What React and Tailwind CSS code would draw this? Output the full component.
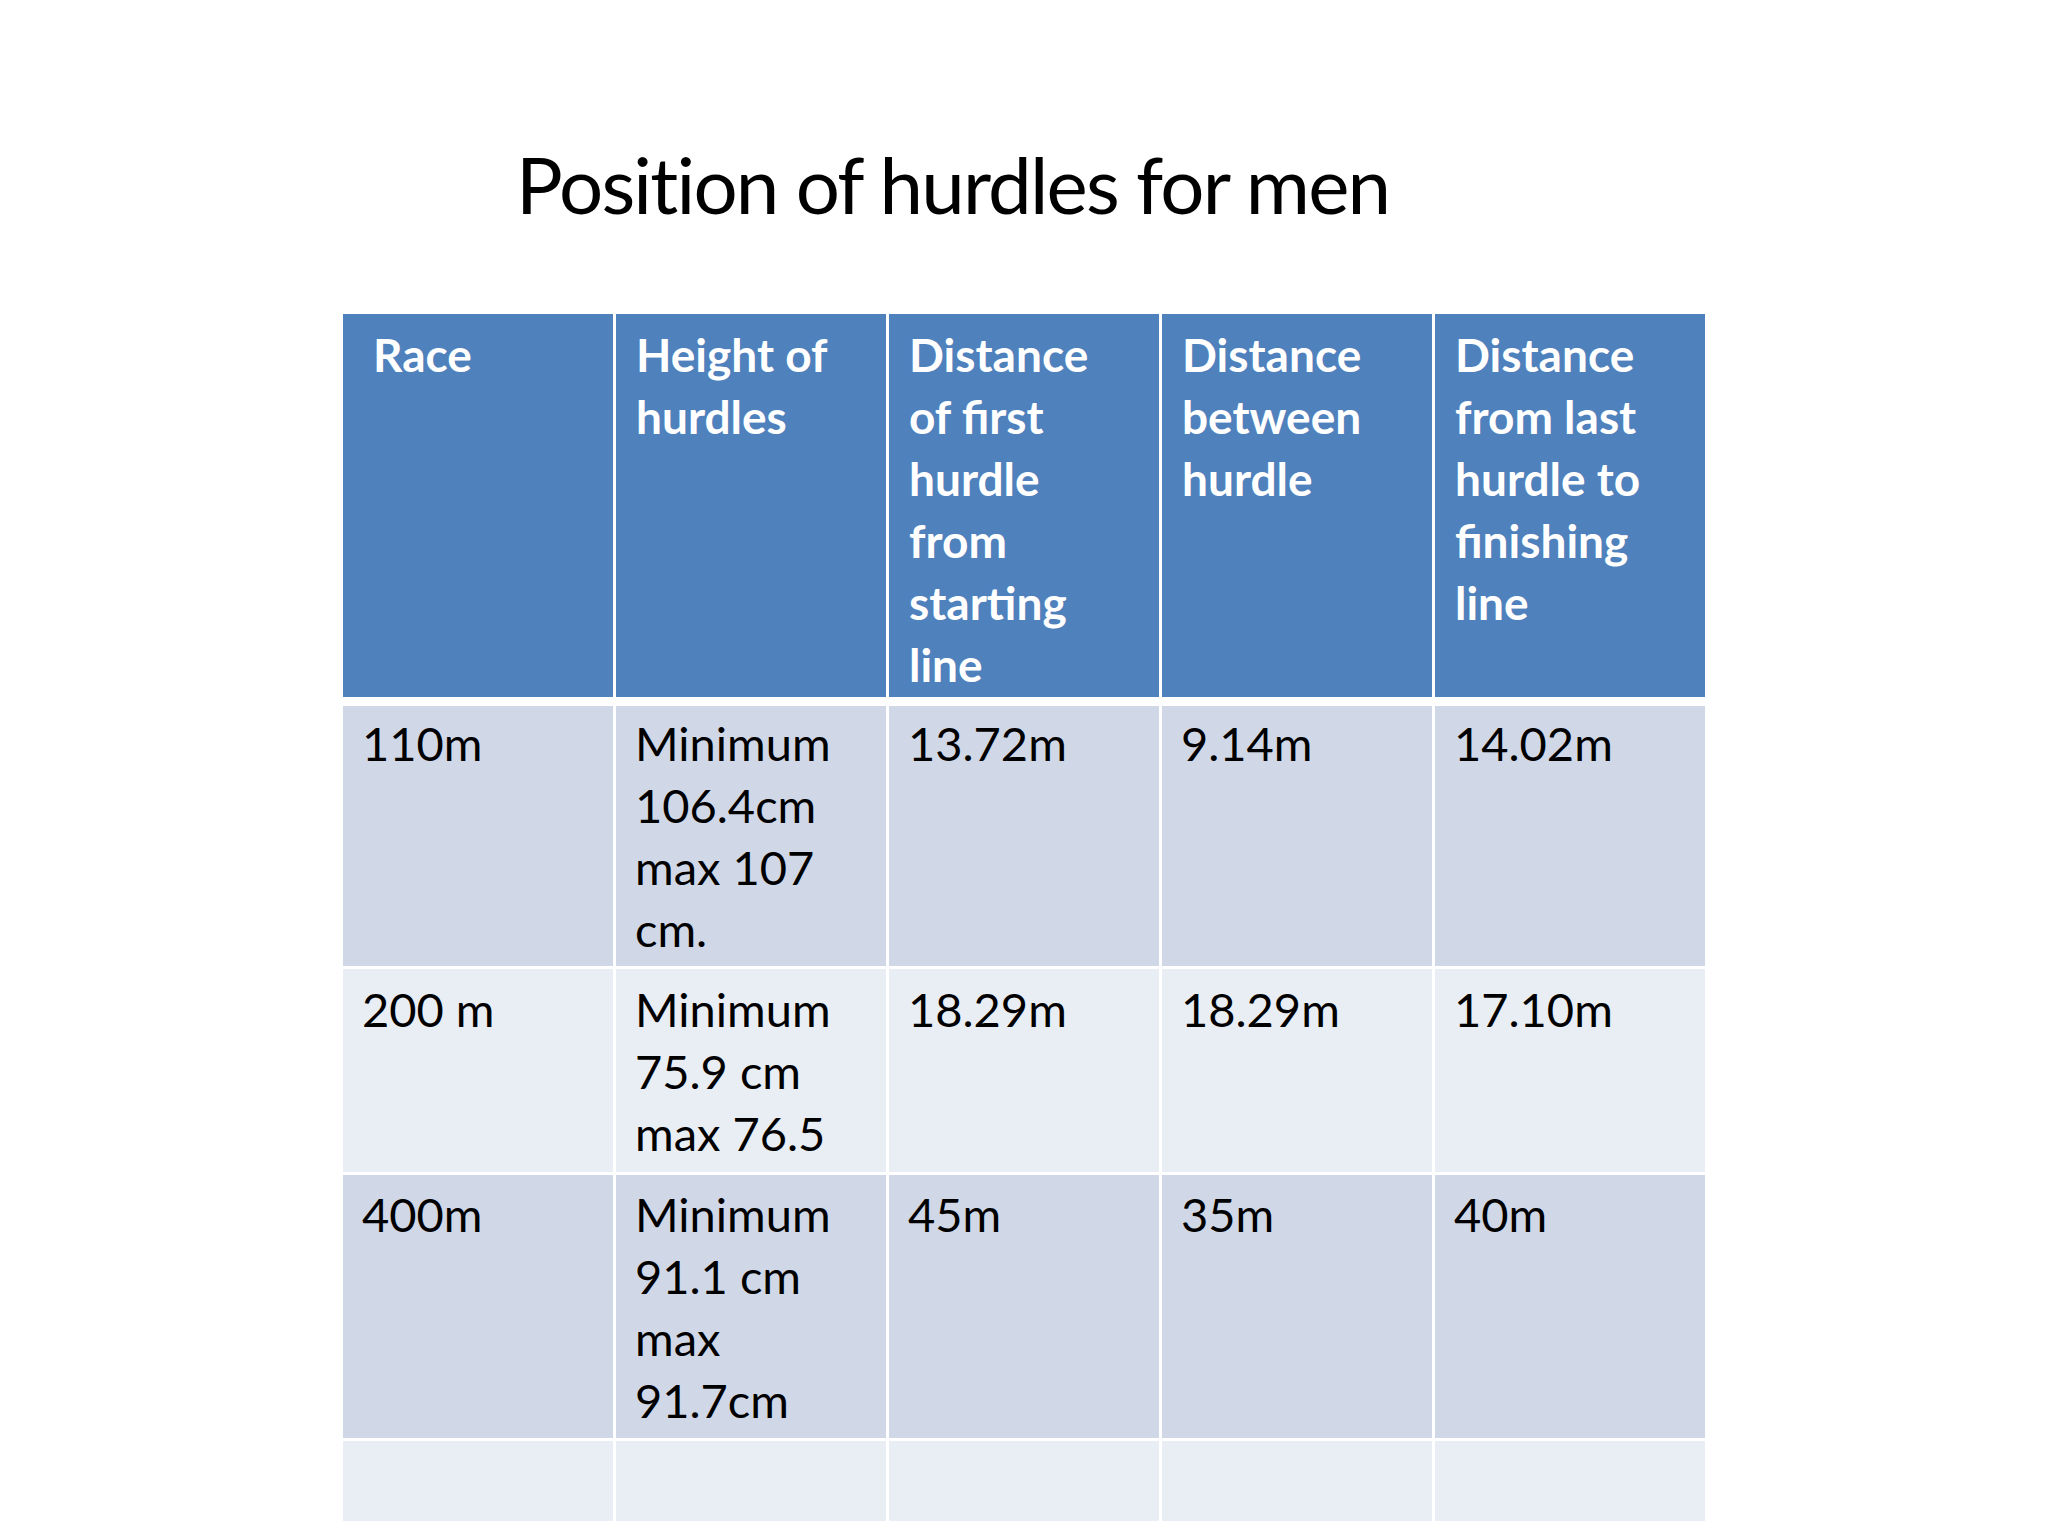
import React from "react";

const header = [
  ["Race"],
  ["Height of", "hurdles"],
  ["Distance", "of first", "hurdle", "from", "starting", "line"],
  ["Distance", "between", "hurdle"],
  ["Distance", "from last", "hurdle to", "finishing", "line"],
];

const rows = [
  {
    h: "h-[260px]",
    pt: "pt-[6px]",
    bg: "bg-[#d0d8e8]",
    cells: [["110m"], ["Minimum", "106.4cm", "max 107", "cm."], ["13.72m"], ["9.14m"], ["14.02m"]],
  },
  {
    h: "h-[203px]",
    pt: "pt-[9px]",
    bg: "bg-[#e9edf4]",
    cells: [["200 m"], ["Minimum", "75.9 cm", "max 76.5"], ["18.29m"], ["18.29m"], ["17.10m"]],
  },
  {
    h: "h-[263px]",
    pt: "pt-[8px]",
    bg: "bg-[#d0d8e8]",
    cells: [["400m"], ["Minimum", "91.1 cm", "max", "91.7cm"], ["45m"], ["35m"], ["40m"]],
  },
  {
    h: "h-[80px]",
    pt: "pt-[6px]",
    bg: "bg-[#e9edf4]",
    cells: [[], [], [], [], []],
  },
];

function Lines({ lines }) {
  return lines.map((l, i) => (
    <div key={i} className="whitespace-nowrap">
      {l}
    </div>
  ));
}

export default function App() {
  return (
    <div className="w-[2048px] h-[1536px] bg-white flex flex-col font-['Lato',_sans-serif] text-black overflow-hidden">
      <div className="pt-[136px] pl-[516px] text-[78px] leading-[96px] tracking-[-1.8px] whitespace-nowrap">
        Position of hurdles for men
      </div>
      <div className="mt-[82px] ml-[343px] w-[1362px] flex flex-col">
        <div className="grid grid-cols-[repeat(5,270px)] gap-x-[3px] h-[383px]">
          {header.map((lines, i) => (
            <div
              key={i}
              className={`bg-[#4f81bd] text-white font-bold text-[46px] leading-[62px] pt-[10px] ${
                i === 0 ? "pl-[30px]" : "pl-[20px]"
              }`}
            >
              <Lines lines={lines} />
            </div>
          ))}
        </div>
        {rows.map((r, ri) => (
          <div
            key={ri}
            className={`grid grid-cols-[repeat(5,270px)] gap-x-[3px] ${r.h} ${ri === 0 ? "mt-[9px]" : "mt-[3px]"}`}
          >
            {r.cells.map((lines, ci) => (
              <div key={ci} className={`${r.bg} text-[47px] leading-[62px] ${r.pt} pl-[19px]`}>
                <Lines lines={lines} />
              </div>
            ))}
          </div>
        ))}
      </div>
    </div>
  );
}
